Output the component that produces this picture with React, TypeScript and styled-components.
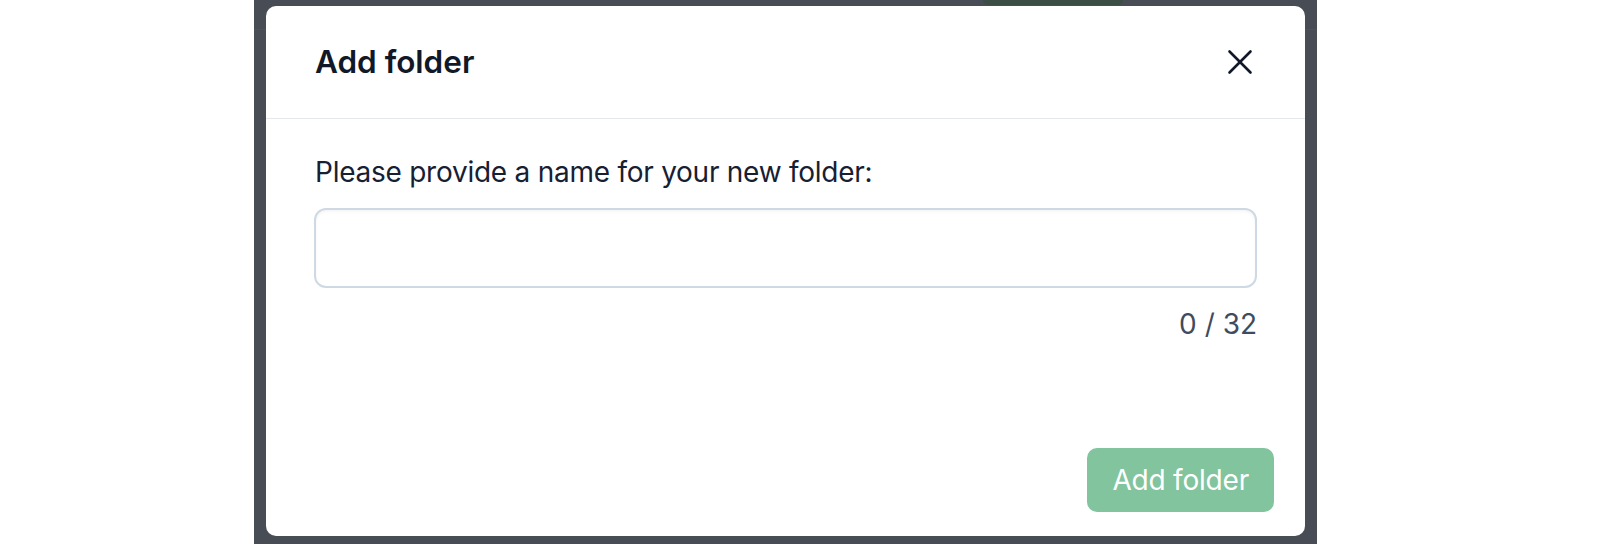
import React from "react";
import styled, { createGlobalStyle } from "styled-components";
import { X } from "lucide-react";

const GlobalStyle = createGlobalStyle`
  html, body {
    margin: 0;
    padding: 0;
    background: #ffffff;
    font-family: Inter, "Noto Sans", "Liberation Sans", sans-serif;
    -webkit-font-smoothing: antialiased;
  }
  * {
    box-sizing: border-box;
  }
`;

const Page = styled.div({
  height: 544,
  display: "flex",
  paddingLeft: 254,
  overflow: "hidden",
});

const Frame = styled.div({
  position: "relative",
  width: 1063,
  height: "100%",
  background: "#474c55",
});

const BehindHeader = styled.div({
  height: 30,
  borderBottom: "1px solid #4d525b",
  paddingLeft: 729,
});

const BehindButton = styled.div({
  width: 140,
  height: 5,
  background: "#3c4d45",
  borderRadius: "0 0 8px 8px",
});

const Overlay = styled.div({
  position: "absolute",
  inset: 0,
  padding: "6px 12px 8px",
  display: "flex",
});

const Modal = styled.div({
  flex: 1,
  display: "flex",
  flexDirection: "column",
  background: "#ffffff",
  borderRadius: 10,
  overflow: "hidden",
});

const Header = styled.div({
  height: 113,
  flexShrink: 0,
  display: "flex",
  alignItems: "center",
  justifyContent: "space-between",
  padding: "0 44px 1px 49px",
  borderBottom: "1px solid #e4e8ec",
});

const Title = styled.h2({
  margin: 0,
  fontSize: 31.5,
  fontWeight: 600,
  lineHeight: "44px",
  color: "#111827",
});

const CloseButton = styled.button({
  width: 42,
  height: 42,
  padding: 0,
  border: "none",
  background: "transparent",
  color: "#111827",
  display: "flex",
  alignItems: "center",
  justifyContent: "center",
  cursor: "pointer",
});

const Body = styled.div({
  flex: 1,
  display: "flex",
  flexDirection: "column",
  padding: "32px 48px 0",
});

const Label = styled.label({
  fontSize: 28,
  lineHeight: "42px",
  letterSpacing: "-0.25px",
  color: "#172033",
  paddingLeft: 1,
});

const NameInput = styled.input({
  marginTop: 15,
  height: 80,
  width: "100%",
  border: "2px solid #cfd9e3",
  borderRadius: 12,
  padding: "0 24px",
  fontFamily: "inherit",
  fontSize: 28,
  color: "#172033",
  outline: "none",
  boxShadow: "inset 0 2px 3px rgba(15, 23, 42, 0.04)",
});

const Counter = styled.div({
  marginTop: 15,
  alignSelf: "flex-end",
  fontSize: 28,
  lineHeight: "42px",
  color: "#3f4b5e",
});

const Footer = styled.div({
  flexShrink: 0,
  display: "flex",
  justifyContent: "flex-end",
  padding: "24px 31px 24px",
});

const PrimaryButton = styled.button<{ disabled?: boolean }>`
  height: 64px;
  padding: 0 25px;
  border: none;
  border-radius: 10px;
  background: ${({ disabled }) => (disabled ? "#81c49e" : "#22a05b")};
  color: #ffffff;
  font-family: inherit;
  font-size: 28px;
  line-height: 42px;
  letter-spacing: -0.2px;
  cursor: ${({ disabled }) => (disabled ? "default" : "pointer")};
`;

export default function App() {
  const [name, setName] = React.useState("");
  const max = 32;

  return (
    <>
      <GlobalStyle />
      <Page>
        <Frame>
          <BehindHeader>
            <BehindButton />
          </BehindHeader>
          <Overlay>
            <Modal role="dialog" aria-labelledby="add-folder-title">
              <Header>
                <Title id="add-folder-title">Add folder</Title>
                <CloseButton aria-label="Close">
                  <X size={42} strokeWidth={1.5} />
                </CloseButton>
              </Header>
              <Body>
                <Label htmlFor="folder-name">
                  Please provide a name for your new folder:
                </Label>
                <NameInput
                  id="folder-name"
                  value={name}
                  maxLength={max}
                  onChange={(e) => setName(e.target.value)}
                />
                <Counter>
                  {name.length} / {max}
                </Counter>
              </Body>
              <Footer>
                <PrimaryButton disabled={name.trim().length === 0}>
                  Add folder
                </PrimaryButton>
              </Footer>
            </Modal>
          </Overlay>
        </Frame>
      </Page>
    </>
  );
}
